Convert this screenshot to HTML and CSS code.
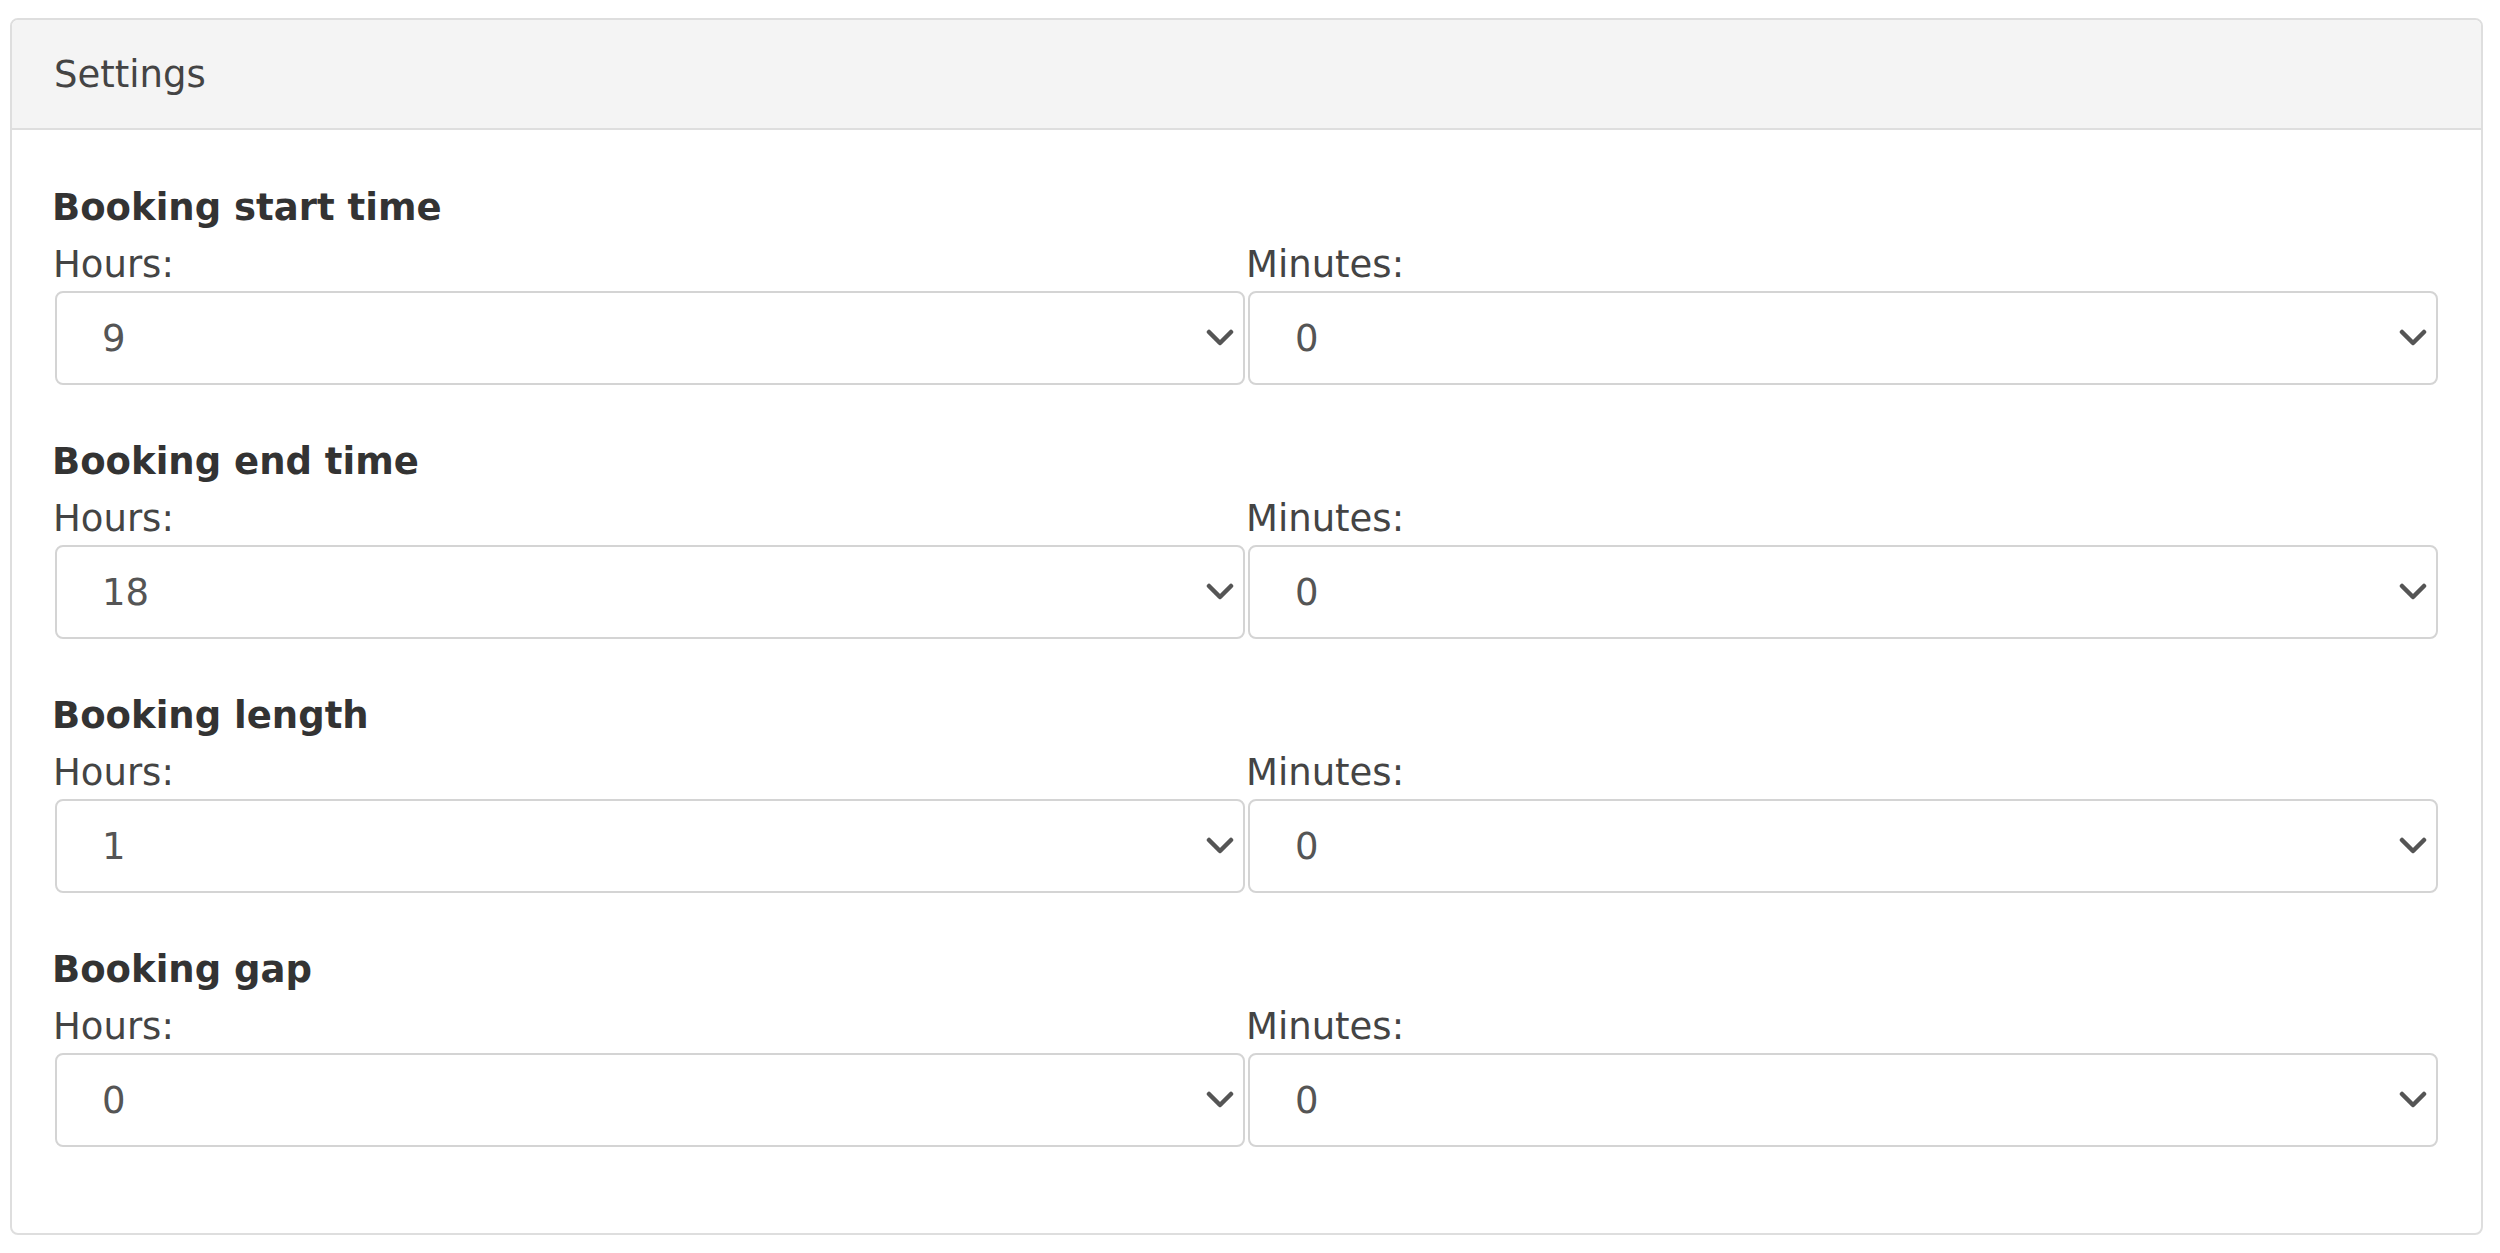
FILE: index.html
```html
<!DOCTYPE html>
<html lang="en">
<head>
  <meta charset="UTF-8">
  <title>Settings</title>
  <link rel="stylesheet" href="styles.css">
</head>
<body>
  <div class="panel">
    <div class="panel-heading">Settings</div>
    <div class="panel-body">

      <div class="time-group">
        <h4>Booking start time</h4>
        <div class="time-row">
          <div class="field">
            <label for="startH">Hours:</label>
            <div class="select-wrap">
              <select id="startH"><option>9</option></select>
              <svg class="chevron" viewBox="0 0 28 18"><polyline points="3,3 14,14 25,3"/></svg>
            </div>
          </div>
          <div class="field">
            <label for="startM">Minutes:</label>
            <div class="select-wrap">
              <select id="startM"><option>0</option></select>
              <svg class="chevron" viewBox="0 0 28 18"><polyline points="3,3 14,14 25,3"/></svg>
            </div>
          </div>
        </div>
      </div>

      <div class="time-group">
        <h4>Booking end time</h4>
        <div class="time-row">
          <div class="field">
            <label for="endH">Hours:</label>
            <div class="select-wrap">
              <select id="endH"><option>18</option></select>
              <svg class="chevron" viewBox="0 0 28 18"><polyline points="3,3 14,14 25,3"/></svg>
            </div>
          </div>
          <div class="field">
            <label for="endM">Minutes:</label>
            <div class="select-wrap">
              <select id="endM"><option>0</option></select>
              <svg class="chevron" viewBox="0 0 28 18"><polyline points="3,3 14,14 25,3"/></svg>
            </div>
          </div>
        </div>
      </div>

      <div class="time-group">
        <h4>Booking length</h4>
        <div class="time-row">
          <div class="field">
            <label for="lenH">Hours:</label>
            <div class="select-wrap">
              <select id="lenH"><option>1</option></select>
              <svg class="chevron" viewBox="0 0 28 18"><polyline points="3,3 14,14 25,3"/></svg>
            </div>
          </div>
          <div class="field">
            <label for="lenM">Minutes:</label>
            <div class="select-wrap">
              <select id="lenM"><option>0</option></select>
              <svg class="chevron" viewBox="0 0 28 18"><polyline points="3,3 14,14 25,3"/></svg>
            </div>
          </div>
        </div>
      </div>

      <div class="time-group">
        <h4>Booking gap</h4>
        <div class="time-row">
          <div class="field">
            <label for="gapH">Hours:</label>
            <div class="select-wrap">
              <select id="gapH"><option>0</option></select>
              <svg class="chevron" viewBox="0 0 28 18"><polyline points="3,3 14,14 25,3"/></svg>
            </div>
          </div>
          <div class="field">
            <label for="gapM">Minutes:</label>
            <div class="select-wrap">
              <select id="gapM"><option>0</option></select>
              <svg class="chevron" viewBox="0 0 28 18"><polyline points="3,3 14,14 25,3"/></svg>
            </div>
          </div>
        </div>
      </div>

    </div>
  </div>
</body>
</html>
```

FILE: styles.css
```css
body {
  font-family: 'DejaVu Sans', Verdana, sans-serif;
  font-size: 37px;
  color: #444;
  background: #fff;
  margin: 0;
  padding: 18px 17px 0 10px;
}
.panel {
  border: 2px solid #dedede;
  border-radius: 8px;
  overflow: hidden;
}
.panel-heading {
  background: #f4f4f4;
  border-bottom: 2px solid #dedede;
  height: 110px;
  line-height: 52px;
  padding: 29px 42px 0;
  box-sizing: border-box;
  color: #444;
}
.panel-body {
  padding: 52px 43px 86px;
  display: flex;
  flex-direction: column;
  gap: 51px;
}
.time-group h4 {
  margin: 0 0 5px -3px;
  font-size: 37px;
  line-height: 52px;
  font-weight: bold;
  color: #333;
}
.time-row {
  display: grid;
  grid-template-columns: 1fr 1fr;
  gap: 3px;
}
.field label {
  display: block;
  line-height: 52px;
  margin-left: -2px;
  color: #444;
}
.select-wrap {
  position: relative;
}
.select-wrap select {
  display: block;
  width: 100%;
  height: 94px;
  box-sizing: border-box;
  appearance: none;
  -webkit-appearance: none;
  background: #fff;
  border: 2px solid #d4d4d4;
  border-radius: 8px;
  padding: 0 60px 0 45px;
  font-family: 'DejaVu Sans', Verdana, sans-serif;
  font-size: 37px;
  color: #555;
  margin: 0;
}
.chevron {
  position: absolute;
  right: 11px;
  top: 38px;
  width: 28px;
  height: 18px;
  pointer-events: none;
  fill: none;
  stroke: #555;
  stroke-width: 4.5;
  stroke-linecap: round;
  stroke-linejoin: round;
}
```
